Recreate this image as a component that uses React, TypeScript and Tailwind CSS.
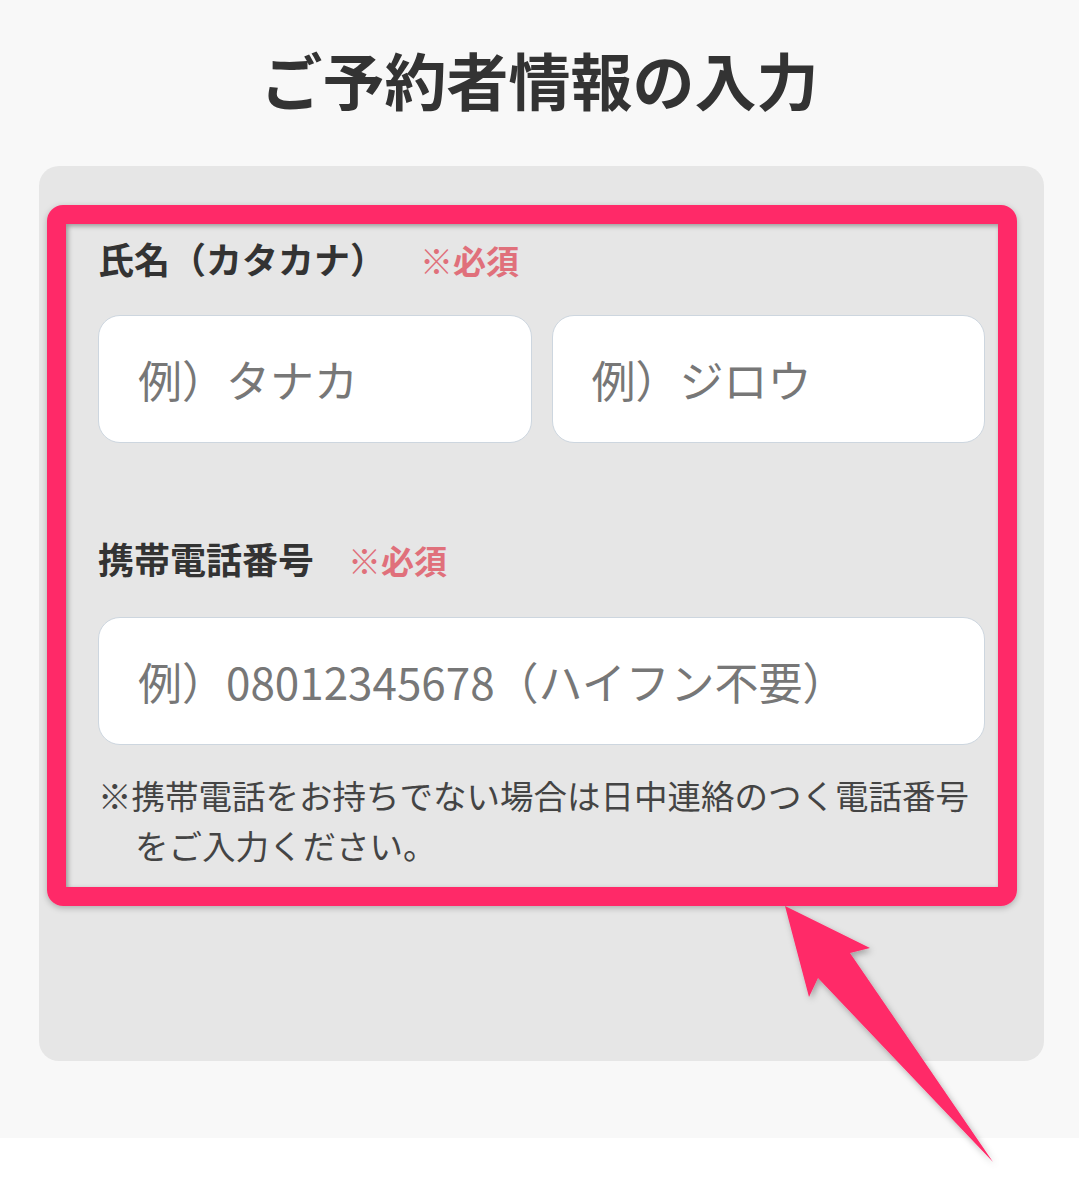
import React from "react";

function Label({ text }: { text: string }) {
  return (
    <div className="flex items-baseline leading-[48px]">
      <span className="text-[36px] font-bold text-[#333]">{text}</span>
      <span className="ml-[34px] text-[33px] font-bold text-[#e0707b]">※必須</span>
    </div>
  );
}

function Field({ placeholder }: { placeholder: string }) {
  return (
    <input
      type="text"
      placeholder={placeholder}
      className="h-[128px] w-full rounded-[22px] border-[1.5px] border-[#cdd6df] bg-white pl-[39px] text-[44px] text-[#333] outline-none placeholder:text-[#777]"
    />
  );
}

export default function App() {
  return (
    <div className="relative min-h-[1182px] bg-white font-['Noto_Sans_CJK_JP','Noto_Sans',sans-serif]">
      <div className="h-[1138px] bg-[#f8f8f8] pt-[42px]">
        <h1 className="text-center text-[62px] font-bold leading-[74px] text-[#333]">
          ご予約者情報の入力
        </h1>

        <div className="relative mt-[50px] ml-[39px] w-[1005px] rounded-[20px] bg-[#e6e6e6] px-[59px] pt-[68px] pb-[191px]">
          <Label text="氏名（カタカナ）" />
          <div className="mt-[31px] grid grid-cols-2 gap-[20px]">
            <Field placeholder="例）タナカ" />
            <Field placeholder="例）ジロウ" />
          </div>

          <div className="mt-[91px]">
            <Label text="携帯電話番号" />
          </div>
          <div className="mt-[33px]">
            <Field placeholder="例）08012345678（ハイフン不要）" />
          </div>

          <p className="mt-[25px] pl-[37px] indent-[-37px] text-[33.5px] leading-[50px] text-[#444]">
            ※携帯電話をお持ちでない場合は日中連絡のつく電話番号をご入力ください。
          </p>

          {/* annotation frame */}
          <div className="pointer-events-none absolute top-[39px] left-[8px] h-[701px] w-[970px] rounded-[16px] border-[19px] border-[#ff2968] shadow-[inset_2px_2px_5px_rgba(0,0,0,0.35),0_2px_6px_rgba(0,0,0,0.25)]" />
        </div>
      </div>

      {/* annotation arrow */}
      <svg
        className="pointer-events-none absolute top-0 left-0"
        width="1079"
        height="1182"
        viewBox="0 0 1079 1182"
      >
        <defs>
          <filter id="arrowShadow" x="-20%" y="-20%" width="140%" height="140%">
            <feDropShadow dx="2" dy="3" stdDeviation="3" floodColor="#000" floodOpacity="0.3" />
          </filter>
        </defs>
        <polygon
          points="785,906 870,948 850,953 993,1162 818,978 809,997"
          fill="#ff2968"
          filter="url(#arrowShadow)"
        />
      </svg>
    </div>
  );
}
